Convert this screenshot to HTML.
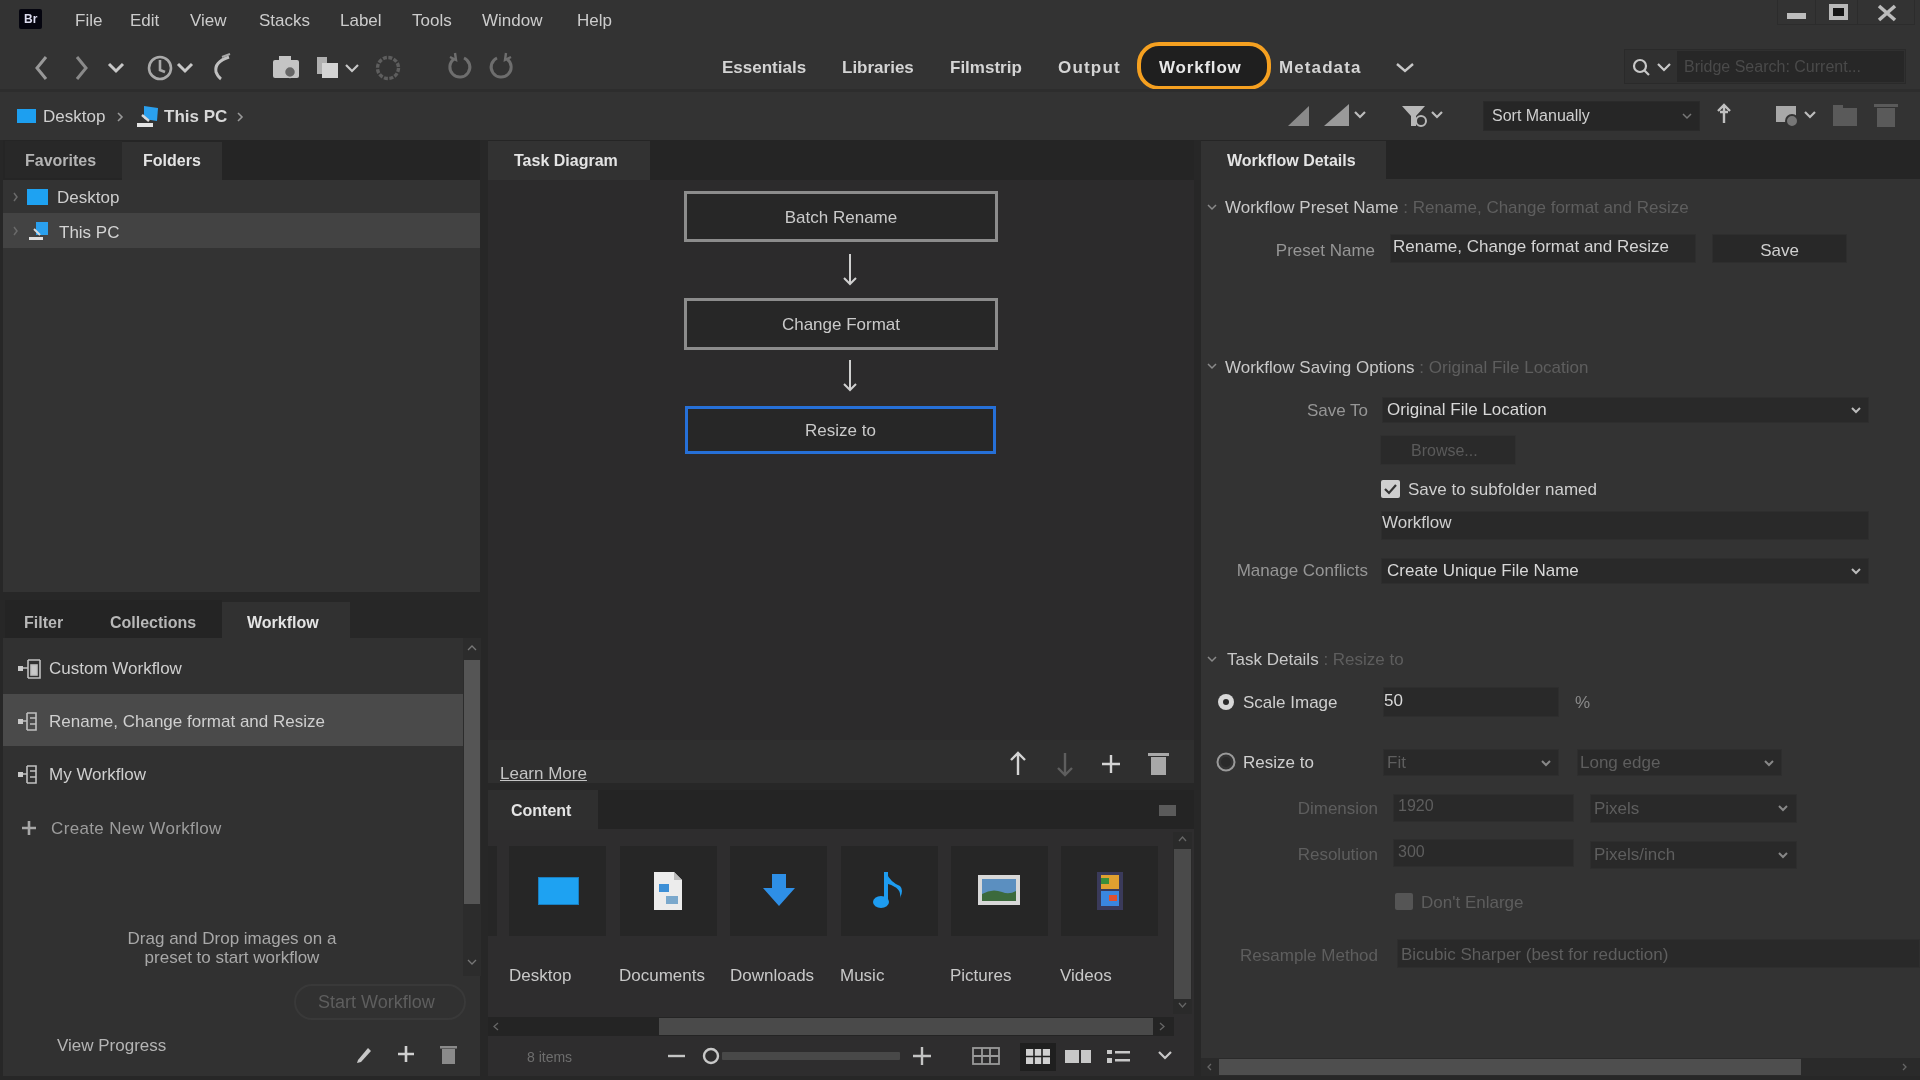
<!DOCTYPE html>
<html><head><meta charset="utf-8">
<style>
*{margin:0;padding:0;box-sizing:border-box}
html,body{width:1920px;height:1080px;overflow:hidden;background:#272727;font-family:"Liberation Sans",sans-serif;color:#cfcfcf}
.a{position:absolute}
.t{position:absolute;white-space:nowrap;line-height:1}
#menubar{left:0;top:0;width:1920px;height:40px;background:#333333}
#toolbar{left:0;top:40px;width:1920px;height:52px;background:#333333}
#pathbar{left:0;top:92px;width:1920px;height:48px;background:#333333}
.mi{top:12px;font-size:17px;color:#cccccc}
.ws{top:19px;font-size:17px;font-weight:bold;color:#d4d4d4}
.tb{font-size:16px;font-weight:bold;color:#e4e4e4}
.tile{top:846px;width:97px;height:90px;background:#262626}
.lbl{top:967px;font-size:17px;color:#c8c8c8}
.rl{font-size:17px;color:#969696;text-align:right}
.inp{background:#292929;border:1px solid #2e2e2e}
</style></head><body>
<div id="root" style="position:absolute;left:0;top:0;width:1920px;height:1080px;background:#272727;filter:blur(0.7px)">
<!-- menubar -->
<div id="menubar" class="a">
  <div class="a" style="left:19px;top:9px;width:23px;height:20px;background:#05050f;border-radius:2px"></div>
  <div class="t" style="left:24px;top:13px;font-size:12px;font-weight:bold;color:#dcdcf0">Br</div>
  <div class="t mi" style="left:75px">File</div>
  <div class="t mi" style="left:130px">Edit</div>
  <div class="t mi" style="left:190px">View</div>
  <div class="t mi" style="left:259px">Stacks</div>
  <div class="t mi" style="left:340px">Label</div>
  <div class="t mi" style="left:412px">Tools</div>
  <div class="t mi" style="left:482px">Window</div>
  <div class="t mi" style="left:577px">Help</div>
  <!-- window controls -->
  <div class="a" style="left:1777px;top:0;width:39px;height:25px;border:1px solid #2c2c2c;border-top:0"></div>
  <div class="a" style="left:1816px;top:0;width:42px;height:25px;border:1px solid #2c2c2c;border-top:0;border-left:0"></div>
  <div class="a" style="left:1858px;top:0;width:57px;height:25px;border:1px solid #2c2c2c;border-top:0;border-left:0"></div>
  <div class="a" style="left:1787px;top:13px;width:19px;height:6px;background:#bdbdbd"></div>
  <div class="a" style="left:1829px;top:4px;width:19px;height:16px;border:4px solid #b8b8b8;background:#151515"></div>
  <svg class="a" style="left:1876px;top:3px" width="22" height="19"><path d="M3 3 L19 17 M19 3 L3 17" stroke="#bcbcbc" stroke-width="3.6"/></svg>
</div>

<!-- toolbar -->
<div id="toolbar" class="a">
  <svg class="a" style="left:0;top:0" width="640" height="52">
    <g fill="none" stroke="#a8a8a8" stroke-width="2.2">
      <path d="M46 17 L37 28 L46 39" stroke="#999" stroke-width="3"/>
      <path d="M77 17 L86 28 L77 39" stroke="#8a8a8a" stroke-width="3"/>
      <path d="M109 24 L116 31 L123 24" stroke="#c8c8c8" stroke-width="3"/>
      <circle cx="160" cy="28" r="11" stroke="#aaa" stroke-width="2.6"/>
      <path d="M160 20 L160 30 L165 32" stroke-width="2.6"/>
      <path d="M178 24 L185 31 L192 24" stroke="#c8c8c8" stroke-width="3"/>
      <path d="M229 17 Q214 22 216 32 Q218 37 221 39" stroke="#c0c0c0" stroke-width="3"/>
      <path d="M222 17 L230 14"/>
      <path d="M346 25 L352 31 L358 25" stroke="#c8c8c8"/>
      <circle cx="388" cy="28" r="10.5" stroke="#5e5e5e" stroke-width="3.4" stroke-dasharray="4 1.5"/>
      <path d="M454 19 A10 10 0 1 0 464 18" stroke="#6e6e6e" stroke-width="3"/><path d="M450 17 L456 20 L455 13" stroke="#6e6e6e" stroke-width="2.4"/>
      <path d="M507 19 A10 10 0 1 1 497 18" stroke="#6e6e6e" stroke-width="3"/><path d="M511 17 L505 20 L506 13" stroke="#6e6e6e" stroke-width="2.4"/>
    </g>
    <g fill="#c4c4c4">
      <rect x="273" y="20" width="26" height="18" rx="2"/>
      <rect x="279" y="16" width="12" height="5"/>
      <circle cx="290" cy="32" r="5.5" fill="#666" stroke="#c4c4c4" stroke-width="1.5"/>
      <rect x="317" y="17" width="10" height="17" fill="#b0b0b0"/>
      <rect x="322" y="23" width="16" height="15" fill="#d4d4d4"/>
    </g>
  </svg>
  <div class="t ws" style="left:722px">Essentials</div>
  <div class="t ws" style="left:842px">Libraries</div>
  <div class="t ws" style="left:950px">Filmstrip</div>
  <div class="t ws" style="left:1058px;letter-spacing:1.2px">Output</div>
  <div class="a" style="left:1137px;top:2px;width:134px;height:48px;border:4px solid #f5a020;border-radius:22px;background:#1f1f1f"></div>
  <div class="t ws" style="left:1159px;color:#e8e8e8;letter-spacing:0.8px">Workflow</div>
  <div class="t ws" style="left:1279px;letter-spacing:1.1px">Metadata</div>
  <svg class="a" style="left:1394px;top:18px" width="22" height="20"><path d="M3 6 L11 13 L19 6" fill="none" stroke="#c8c8c8" stroke-width="2.4"/></svg>
  <!-- search -->
  <div class="a" style="left:1624px;top:9px;width:282px;height:35px;border:1px solid #2a2a2a;background:#303030"></div>
  <svg class="a" style="left:1630px;top:16px" width="50" height="22"><g fill="none" stroke="#c8c8c8" stroke-width="2.2"><circle cx="10" cy="10" r="6"/><path d="M14 14 L19 19"/><path d="M28 8 L34 14 L40 8"/></g></svg>
  <div class="a" style="left:1677px;top:11px;width:227px;height:31px;background:#272727"></div>
  <div class="t" style="left:1684px;top:19px;font-size:16px;color:#4a4a4a">Bridge Search: Current...</div>
</div>

<div class="a" style="left:0;top:89px;width:1920px;height:3px;background:#2d2d2d"></div>
<!-- pathbar -->
<div id="pathbar" class="a">
  <div class="a" style="left:17px;top:17px;width:19px;height:14px;background:#1d9ff0"></div>
  <div class="t" style="left:43px;top:16px;font-size:17px;color:#cfcfcf">Desktop</div>
  <svg class="a" style="left:114px;top:18px" width="12" height="14"><path d="M4 3 L8 7 L4 11" fill="none" stroke="#999" stroke-width="1.6"/></svg>
  <svg class="a" style="left:135px;top:12px" width="26" height="26"><path d="M9 2 L23 4 L22 17 L9 15 Z" fill="#2aa0ee"/><path d="M2 19 L18 19 L18 23 L2 23 Z" fill="#e4e4e4"/><path d="M7 11 L14 17" stroke="#d8d8d8" stroke-width="2.4"/></svg>
  <div class="t" style="left:164px;top:16px;font-size:17px;font-weight:bold;color:#d8d8d8">This PC</div>
  <svg class="a" style="left:234px;top:18px" width="12" height="14"><path d="M4 3 L8 7 L4 11" fill="none" stroke="#999" stroke-width="1.6"/></svg>

  <svg class="a" style="left:1280px;top:0" width="640" height="48">
    <g fill="#8c8c8c">
      <path d="M8 34 L29 14 L29 34 Z" fill="#8a8a8a"/>
      <path d="M44 34 L69 12 L69 34 Z" fill="#9a9a9a"/>
    </g>
    <g fill="none" stroke="#bcbcbc" stroke-width="2.2">
      <path d="M75 20 L80 25 L85 20"/>
      <path d="M152 20 L157 25 L162 20"/>
      <path d="M525 20 L530 25 L535 20"/>
    </g>
    <path d="M122 14 L145 14 L136 24 L136 34 L131 34 L131 24 Z" fill="#b8b8b8"/>
    <circle cx="141" cy="29" r="5" fill="#333" stroke="#b8b8b8" stroke-width="2"/>
    <path d="M444 13 L444 31 M438 19 L444 13 L450 19 M440 20 L448 20" stroke="#c0c0c0" stroke-width="2.4" fill="none"/>
    <rect x="496" y="14" width="20" height="16" fill="#a8a8a8"/>
    <circle cx="512" cy="29" r="6" fill="#777" stroke="#333" stroke-width="2"/>
    <rect x="553" y="16" width="24" height="18" fill="#5a5a5a"/>
    <rect x="553" y="13" width="10" height="4" fill="#5a5a5a"/>
    <rect x="597" y="16" width="18" height="19" fill="#5a5a5a"/>
    <rect x="594" y="12" width="24" height="3" fill="#5a5a5a"/>
  </svg>
  <div class="a" style="left:1483px;top:9px;width:217px;height:30px;background:#262626;border:1px solid #2a2a2a"></div>
  <div class="t" style="left:1492px;top:16px;font-size:16px;color:#cfcfcf">Sort Manually</div>
  <svg class="a" style="left:1680px;top:19px" width="14" height="10"><path d="M3 3 L7 7 L11 3" fill="none" stroke="#777" stroke-width="1.5"/></svg>
</div>
<!-- left top panel -->
<div class="a" style="left:3px;top:140px;width:477px;height:452px;background:#333333"></div>
<div class="a" style="left:3px;top:140px;width:477px;height:40px;background:#252525"></div>
<div class="a" style="left:5px;top:141px;width:117px;height:37px;background:#282828"></div>
<div class="a" style="left:122px;top:142px;width:100px;height:38px;background:#313131"></div>
<div class="t tb" style="left:25px;top:153px;color:#b4b4b4">Favorites</div>
<div class="t tb" style="left:143px;top:153px">Folders</div>
<div class="a" style="left:3px;top:213px;width:477px;height:35px;background:#434343"></div>
<svg class="a" style="left:10px;top:188px" width="10" height="50"><g fill="none" stroke="#6a6a6a" stroke-width="1.5"><path d="M4 5 L7 9 L4 13"/><path d="M4 39 L7 43 L4 47"/></g></svg>
<div class="a" style="left:27px;top:189px;width:21px;height:16px;background:#1ea2f2"></div>
<div class="t" style="left:57px;top:189px;font-size:17px;color:#cdcdcd">Desktop</div>
<svg class="a" style="left:25px;top:219px" width="26" height="24"><path d="M11 3 L23 3 L23 16 L11 16 Z" fill="#2aa0ee"/><path d="M4 18 L18 18 L18 21 L4 21 Z" fill="#e0e0e0"/><path d="M9 10 L15 16" stroke="#d8d8d8" stroke-width="2"/></svg>
<div class="t" style="left:59px;top:224px;font-size:17px;color:#d4d4d4">This PC</div>

<!-- left bottom panel -->
<div class="a" style="left:3px;top:595px;width:477px;height:481px;background:#313131"></div>
<div class="a" style="left:3px;top:595px;width:477px;height:43px;background:#272727"></div>
<div class="a" style="left:5px;top:600px;width:217px;height:38px;background:#242424"></div>
<div class="a" style="left:222px;top:602px;width:128px;height:36px;background:#313131"></div>
<div class="t tb" style="left:24px;top:615px;color:#b8b8b8">Filter</div>
<div class="t tb" style="left:110px;top:615px;color:#b8b8b8">Collections</div>
<div class="t tb" style="left:247px;top:615px">Workflow</div>

<div class="a" style="left:3px;top:694px;width:460px;height:52px;background:#4a4a4a"></div>
<!-- scrollbar -->
<div class="a" style="left:463px;top:638px;width:18px;height:338px;background:#2c2c2c"></div>
<div class="a" style="left:464px;top:660px;width:16px;height:244px;background:#555555"></div>
<svg class="a" style="left:463px;top:640px" width="18" height="336"><g fill="none" stroke="#777" stroke-width="1.3"><path d="M5 10 L9 6 L13 10"/><path d="M5 320 L9 324 L13 320"/></g></svg>

<!-- workflow icons -->
<svg class="a" style="left:16px;top:656px" width="30" height="180">
  <g fill="#c8c8c8">
    <rect x="2" y="10" width="5" height="5"/>
    <rect x="2" y="63" width="5" height="5"/>
    <rect x="2" y="116" width="5" height="5"/>
  </g>
  <g fill="none" stroke="#c0c0c0" stroke-width="1.6">
    <path d="M7 12 L12 12 M12 4 L12 22 M12 4 L24 4 M12 22 L24 22 L24 4"/>
    <rect x="15" y="9" width="6" height="10" fill="#c8c8c8"/>
    <path d="M7 65 L11 65 M11 57 L11 74 M11 57 L20 57 L20 74 L11 74 M14 62 L20 62 M14 68 L20 68"/>
    <path d="M7 118 L11 118 M11 110 L11 127 M11 110 L20 110 L20 127 L11 127 M14 115 L20 115 M14 121 L20 121"/>
  </g>
  <path d="M6 172 L20 172 M13 165 L13 179" stroke="#a8a8a8" stroke-width="2.6"/>
</svg>
<div class="t" style="left:49px;top:660px;font-size:17px;color:#cfcfcf">Custom Workflow</div>
<div class="t" style="left:49px;top:713px;font-size:17px;color:#cfcfcf">Rename, Change format and Resize</div>
<div class="t" style="left:49px;top:766px;font-size:17px;color:#cfcfcf">My Workflow</div>
<div class="t" style="left:51px;top:820px;font-size:17px;letter-spacing:0.35px;color:#9c9c9c">Create New Workflow</div>

<div class="t" style="left:112px;top:929px;font-size:17px;color:#a8a8a8;text-align:center;width:240px;white-space:normal;line-height:19px">Drag and Drop images on a preset to start workflow</div>

<div class="a" style="left:294px;top:984px;width:172px;height:36px;border:2px solid #393939;border-radius:18px"></div>
<div class="t" style="left:318px;top:993px;font-size:18px;color:#5e5e5e">Start Workflow</div>
<div class="t" style="left:57px;top:1037px;font-size:17px;color:#b4b4b4">View Progress</div>
<svg class="a" style="left:350px;top:1040px" width="110" height="28">
  <path d="M8 20 L18 8 L21 11 L11 22 L7 23 Z" fill="#c8c8c8"/>
  <path d="M48 14 L64 14 M56 6 L56 22" stroke="#d0d0d0" stroke-width="2.6"/>
  <rect x="92" y="9" width="13" height="15" fill="#8a8a8a"/>
  <rect x="90" y="6" width="17" height="2.5" fill="#8a8a8a"/>
</svg>
<!-- middle top panel -->
<div class="a" style="left:488px;top:140px;width:706px;height:643px;background:#2c2b2c"></div>
<div class="a" style="left:488px;top:140px;width:706px;height:40px;background:#252525"></div>
<div class="a" style="left:488px;top:141px;width:162px;height:39px;background:#323232"></div>
<div class="t tb" style="left:514px;top:153px">Task Diagram</div>

<div class="a" style="left:684px;top:191px;width:314px;height:51px;border:3px solid #8c8c8c;background:#272727"></div>
<div class="t" style="left:684px;top:209px;width:314px;text-align:center;font-size:17px;color:#cacaca">Batch Rename</div>
<div class="a" style="left:684px;top:298px;width:314px;height:52px;border:3px solid #8c8c8c;background:#272727"></div>
<div class="t" style="left:684px;top:316px;width:314px;text-align:center;font-size:17px;color:#cacaca">Change Format</div>
<div class="a" style="left:685px;top:406px;width:311px;height:48px;border:3px solid #2670d8;background:#272727"></div>
<div class="t" style="left:685px;top:422px;width:311px;text-align:center;font-size:17px;color:#cacaca">Resize to</div>
<svg class="a" style="left:840px;top:250px" width="20" height="150">
  <g fill="none" stroke="#d0d0d0" stroke-width="2">
    <path d="M10 4 L10 34 M4 28 L10 34 L16 28"/>
    <path d="M10 110 L10 140 M4 134 L10 140 L16 134"/>
  </g>
</svg>

<!-- learn more strip -->
<div class="a" style="left:488px;top:740px;width:706px;height:43px;background:#2f2f2f"></div>
<div class="t" style="left:500px;top:765px;font-size:17px;color:#c4c4c4;text-decoration:underline">Learn More</div>
<svg class="a" style="left:1000px;top:748px" width="180" height="32">
  <g fill="none" stroke-width="2.4">
    <path d="M18 27 L18 5 M11 12 L18 5 L25 12" stroke="#d4d4d4"/>
    <path d="M65 5 L65 27 M58 20 L65 27 L72 20" stroke="#5e5e5e"/>
    <path d="M102 16 L120 16 M111 7 L111 25" stroke="#d4d4d4"/>
  </g>
  <rect x="151" y="9" width="15" height="18" fill="#a8a8a8"/>
  <rect x="148" y="5" width="21" height="3" fill="#a8a8a8"/>
</svg>

<!-- content panel -->
<div class="a" style="left:488px;top:790px;width:706px;height:286px;background:#2e2d2e"></div>
<div class="a" style="left:488px;top:790px;width:706px;height:39px;background:#242424"></div>
<div class="a" style="left:488px;top:790px;width:110px;height:40px;background:#2f2f2f"></div>
<div class="t tb" style="left:511px;top:803px">Content</div>
<div class="a" style="left:1159px;top:805px;width:17px;height:11px;background:#5a5a5a"></div>

<!-- tiles -->
<div class="a" style="left:488px;top:846px;width:9px;height:90px;background:#262626"></div>
<div class="a tile" style="left:509px"></div>
<div class="a tile" style="left:620px"></div>
<div class="a tile" style="left:730px"></div>
<div class="a tile" style="left:841px"></div>
<div class="a tile" style="left:951px"></div>
<div class="a tile" style="left:1061px"></div>
<!-- tile icons -->
<div class="a" style="left:538px;top:877px;width:41px;height:28px;background:#1ea2f2;border:1px solid #1a7fc0"></div>
<svg class="a" style="left:652px;top:870px" width="32" height="42"><path d="M2 2 L22 2 L30 10 L30 40 L2 40 Z" fill="#ececec"/><path d="M22 2 L22 10 L30 10" fill="#bbb"/><rect x="7" y="14" width="10" height="8" fill="#3d8fd6"/><rect x="14" y="26" width="12" height="8" fill="#7aa8cc"/></svg>
<svg class="a" style="left:761px;top:872px" width="36" height="38"><path d="M11 2 L25 2 L25 16 L34 16 L18 34 L2 16 L11 16 Z" fill="#2e8fe6"/></svg>
<svg class="a" style="left:872px;top:868px" width="34" height="44"><path d="M14 4 L14 32" stroke="#1e9cf0" stroke-width="4"/><ellipse cx="9" cy="34" rx="8" ry="6" fill="#1e9cf0"/><path d="M14 4 Q18 14 28 18 Q32 22 28 30 Q30 20 16 16" fill="#1e9cf0"/></svg>
<svg class="a" style="left:977px;top:874px" width="44" height="32"><rect x="1" y="1" width="42" height="30" fill="#d8d8d8"/><rect x="5" y="5" width="34" height="22" fill="#5b8fc0"/><path d="M5 20 Q15 14 25 18 Q32 21 39 17 L39 27 L5 27 Z" fill="#3c6a3c"/></svg>
<svg class="a" style="left:1094px;top:870px" width="32" height="42"><rect x="3" y="2" width="26" height="38" fill="#3a3a5a"/><rect x="7" y="5" width="18" height="14" fill="#e0a030"/><rect x="7" y="21" width="18" height="15" fill="#3a86e0"/><rect x="7" y="8" width="8" height="6" fill="#3a8e3a"/><rect x="15" y="25" width="8" height="6" fill="#e05030"/></svg>

<div class="t lbl" style="left:509px">Desktop</div>
<div class="t lbl" style="left:619px">Documents</div>
<div class="t lbl" style="left:730px">Downloads</div>
<div class="t lbl" style="left:840px">Music</div>
<div class="t lbl" style="left:950px">Pictures</div>
<div class="t lbl" style="left:1060px">Videos</div>

<!-- vertical scrollbar -->
<div class="a" style="left:1173px;top:832px;width:19px;height:182px;background:#2a2a2a"></div>
<div class="a" style="left:1174px;top:849px;width:17px;height:150px;background:#4a4a4a"></div>
<svg class="a" style="left:1173px;top:830px" width="19" height="186"><g fill="none" stroke="#666" stroke-width="1.3"><path d="M6 11 L9.5 7 L13 11"/><path d="M6 173 L9.5 177 L13 173"/></g></svg>
<!-- horizontal scrollbar -->
<div class="a" style="left:488px;top:1017px;width:686px;height:19px;background:#242424"></div>
<div class="a" style="left:659px;top:1018px;width:494px;height:17px;background:#4a4a4a"></div>
<svg class="a" style="left:488px;top:1017px" width="686" height="19"><g fill="none" stroke="#666" stroke-width="1.3"><path d="M10 6 L6 9.5 L10 13"/><path d="M672 6 L676 9.5 L672 13"/></g></svg>

<!-- status bar -->
<div class="t" style="left:527px;top:1050px;font-size:14px;color:#6e6e6e">8 items</div>
<svg class="a" style="left:660px;top:1040px" width="530" height="32">
  <path d="M8 16 L25 16" stroke="#c4c4c4" stroke-width="2.4"/>
  <rect x="62" y="12" width="178" height="8" rx="1" fill="#484848"/>
  <circle cx="51" cy="16" r="7" fill="#2e2d2e" stroke="#c8c8c8" stroke-width="2.4"/>
  <path d="M253 16 L271 16 M262 7 L262 25" stroke="#c4c4c4" stroke-width="2.4"/>
  <g fill="none" stroke="#9a9a9a" stroke-width="1.8">
    <rect x="313" y="8" width="26" height="16"/>
    <path d="M313 16 L339 16 M322 8 L322 24 M330 8 L330 24"/>
  </g>
  <rect x="360" y="3" width="36" height="28" fill="#1f1f1f"/>
  <g fill="#d0d0d0">
    <rect x="366" y="9" width="24" height="15"/>
  </g>
  <path d="M366 16.5 L390 16.5 M374 9 L374 24 M382 9 L382 24" stroke="#1f1f1f" stroke-width="1.6"/>
  <rect x="405" y="10" width="14" height="13" fill="#c8c8c8"/>
  <rect x="421" y="10" width="10" height="13" fill="#c8c8c8"/>
  <g fill="#c8c8c8"><rect x="447" y="10" width="5" height="4"/><rect x="447" y="18" width="5" height="5"/><rect x="455" y="11" width="15" height="2.5"/><rect x="455" y="19" width="15" height="2.5"/></g>
  <path d="M499 12 L505 18 L511 12" fill="none" stroke="#c8c8c8" stroke-width="2.2"/>
</svg>
<!-- right panel -->
<div class="a" style="left:1201px;top:140px;width:719px;height:936px;background:#333333"></div>
<div class="a" style="left:1201px;top:140px;width:719px;height:39px;background:#252525"></div>
<div class="a" style="left:1201px;top:141px;width:185px;height:39px;background:#323232"></div>
<div class="t tb" style="left:1227px;top:153px">Workflow Details</div>

<svg class="a" style="left:1204px;top:195px" width="16" height="480"><g fill="none" stroke="#8a8a8a" stroke-width="1.5"><path d="M4 10 L8 14 L12 10"/><path d="M4 169 L8 173 L12 169"/><path d="M4 462 L8 466 L12 462"/></g></svg>

<div class="t" style="left:1225px;top:199px;font-size:17px;color:#c8c8c8">Workflow Preset Name <span style="color:#5e5e5e">: Rename, Change format and Resize</span></div>
<div class="t rl" style="left:1200px;top:242px;width:175px">Preset Name</div>
<div class="a inp" style="left:1390px;top:234px;width:306px;height:29px"></div>
<div class="t" style="left:1393px;top:238px;font-size:17px;color:#d4d4d4">Rename, Change format and Resize</div>
<div class="a inp" style="left:1712px;top:234px;width:135px;height:29px;background:#282828"></div>
<div class="t" style="left:1712px;top:242px;width:135px;text-align:center;font-size:17px;color:#cfcfcf">Save</div>

<div class="t" style="left:1225px;top:359px;font-size:17px;color:#c8c8c8">Workflow Saving Options <span style="color:#5e5e5e">: Original File Location</span></div>
<div class="t rl" style="left:1200px;top:402px;width:168px">Save To</div>
<div class="a inp" style="left:1382px;top:397px;width:487px;height:26px"></div>
<div class="t" style="left:1387px;top:401px;font-size:17px;color:#d8d8d8">Original File Location</div>
<svg class="a chev" style="left:1849px;top:404px" width="14" height="12"><path d="M3 4 L7 8 L11 4" fill="none" stroke="#bbb" stroke-width="2"/></svg>
<div class="a" style="left:1380px;top:435px;width:136px;height:30px;background:#2a2a2a;border:1px solid #303030"></div>
<div class="t" style="left:1411px;top:443px;font-size:16px;color:#5a5a5a">Browse...</div>
<div class="a" style="left:1381px;top:480px;width:19px;height:18px;background:#cfcfcf;border-radius:2px"></div>
<svg class="a" style="left:1381px;top:480px" width="19" height="18"><path d="M4 9 L8 13 L15 5" fill="none" stroke="#333" stroke-width="2.2"/></svg>
<div class="t" style="left:1408px;top:481px;font-size:17px;color:#cfcfcf">Save to subfolder named</div>
<div class="a inp" style="left:1381px;top:511px;width:488px;height:29px"></div>
<div class="t" style="left:1382px;top:514px;font-size:17px;color:#cfcfcf">Workflow</div>
<div class="t rl" style="left:1200px;top:562px;width:168px">Manage Conflicts</div>
<div class="a inp" style="left:1381px;top:558px;width:488px;height:26px"></div>
<div class="t" style="left:1387px;top:562px;font-size:17px;color:#d8d8d8">Create Unique File Name</div>
<svg class="a" style="left:1849px;top:565px" width="14" height="12"><path d="M3 4 L7 8 L11 4" fill="none" stroke="#bbb" stroke-width="2"/></svg>

<div class="t" style="left:1227px;top:651px;font-size:17px;color:#c8c8c8">Task Details <span style="color:#5e5e5e">: Resize to</span></div>
<svg class="a" style="left:1214px;top:690px" width="24" height="84">
  <circle cx="12" cy="12" r="8" fill="#d8d8d8"/><circle cx="12" cy="12" r="3" fill="#2a2a2a"/>
  <circle cx="12" cy="72" r="8.5" fill="none" stroke="#9a9a9a" stroke-width="2"/><circle cx="12" cy="72" r="5" fill="#2a2a2a"/>
</svg>
<div class="t" style="left:1243px;top:694px;font-size:17px;color:#cfcfcf">Scale Image</div>
<div class="a inp" style="left:1383px;top:687px;width:176px;height:30px"></div>
<div class="t" style="left:1384px;top:692px;font-size:17px;color:#d8d8d8">50</div>
<div class="t" style="left:1575px;top:694px;font-size:17px;color:#8a8a8a">%</div>
<div class="t" style="left:1243px;top:754px;font-size:17px;color:#cfcfcf">Resize to</div>
<div class="a inp" style="left:1383px;top:749px;width:176px;height:27px"></div>
<div class="t" style="left:1387px;top:754px;font-size:17px;color:#5e5e5e">Fit</div>
<svg class="a" style="left:1539px;top:757px" width="14" height="12"><path d="M3 4 L7 8 L11 4" fill="none" stroke="#888" stroke-width="2"/></svg>
<div class="a inp" style="left:1577px;top:749px;width:205px;height:27px"></div>
<div class="t" style="left:1580px;top:754px;font-size:17px;color:#5e5e5e">Long edge</div>
<svg class="a" style="left:1762px;top:757px" width="14" height="12"><path d="M3 4 L7 8 L11 4" fill="none" stroke="#888" stroke-width="2"/></svg>

<div class="t rl" style="left:1200px;top:800px;width:178px;color:#5e5e5e">Dimension</div>
<div class="a inp" style="left:1393px;top:794px;width:181px;height:28px"></div>
<div class="t" style="left:1398px;top:798px;font-size:16px;color:#5e5e5e">1920</div>
<div class="a inp" style="left:1590px;top:794px;width:207px;height:29px"></div>
<div class="t" style="left:1594px;top:800px;font-size:17px;color:#5e5e5e">Pixels</div>
<svg class="a" style="left:1776px;top:802px" width="14" height="12"><path d="M3 4 L7 8 L11 4" fill="none" stroke="#888" stroke-width="2"/></svg>
<div class="t rl" style="left:1200px;top:846px;width:178px;color:#5e5e5e">Resolution</div>
<div class="a inp" style="left:1393px;top:839px;width:181px;height:28px"></div>
<div class="t" style="left:1398px;top:844px;font-size:16px;color:#5e5e5e">300</div>
<div class="a inp" style="left:1590px;top:841px;width:207px;height:28px"></div>
<div class="t" style="left:1594px;top:846px;font-size:17px;color:#5e5e5e">Pixels/inch</div>
<svg class="a" style="left:1776px;top:849px" width="14" height="12"><path d="M3 4 L7 8 L11 4" fill="none" stroke="#888" stroke-width="2"/></svg>
<div class="a" style="left:1395px;top:893px;width:18px;height:17px;background:#555555;border-radius:2px"></div>
<div class="t" style="left:1421px;top:894px;font-size:17px;color:#5e5e5e">Don't Enlarge</div>
<div class="t rl" style="left:1200px;top:947px;width:178px;color:#5e5e5e">Resample Method</div>
<div class="a inp" style="left:1397px;top:939px;width:523px;height:29px"></div>
<div class="t" style="left:1401px;top:946px;font-size:17px;color:#5e5e5e">Bicubic Sharper (best for reduction)</div>

<!-- bottom scrollbar -->
<div class="a" style="left:1201px;top:1058px;width:719px;height:18px;background:#2a2a2a"></div>
<div class="a" style="left:1219px;top:1059px;width:582px;height:16px;background:#4e4e4e"></div>
<svg class="a" style="left:1201px;top:1058px" width="719" height="18"><g fill="none" stroke="#666" stroke-width="1.3"><path d="M10 6 L7 9 L10 12"/><path d="M702 6 L705 9 L702 12"/></g></svg>
</div></body></html>
